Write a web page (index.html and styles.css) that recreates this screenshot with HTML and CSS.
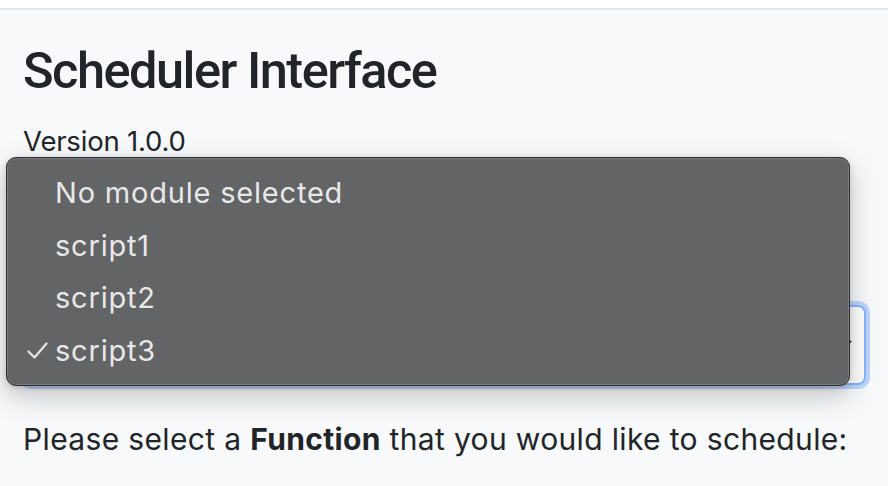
FILE: index.html
```html
<!DOCTYPE html>
<html lang="en">
<head>
<meta charset="utf-8">
<title>Scheduler Interface</title>
<link rel="stylesheet" href="styles.css">
</head>
<body>
<div class="topbar"></div>
<main class="page">
  <h1 class="title">Scheduler Interface</h1>
  <div class="version">Version 1.0.0</div>
  <div class="select">
    <svg class="chevron" width="16" height="10" viewBox="0 0 16 10"><path d="M1.5 1.5 L8 8 L14.5 1.5" fill="none" stroke="#343a40" stroke-width="2" stroke-linecap="round" stroke-linejoin="round"/></svg>
  </div>
  <p class="prompt">Please select a <b>Function</b> that you would like to schedule:</p>

  <ul class="menu">
    <li class="menu-item">No module selected</li>
    <li class="menu-item">script1</li>
    <li class="menu-item">script2</li>
    <li class="menu-item checked"><svg class="check" width="24" height="19" viewBox="0 0 24 19"><path d="M2.5 10.5 L8.5 16.5 L20.5 2.5" fill="none" stroke="#e6e6e6" stroke-width="2.2" stroke-linecap="round" stroke-linejoin="round"/></svg>script3</li>
  </ul>
</main>
</body>
</html>
```
FILE: styles.css
```css
html, body {
  margin: 0;
  padding: 0;
}
body {
  background: #f8f9fa;
  font-family: Inter, "Noto Sans", "Liberation Sans", sans-serif;
  color: #212529;
  height: 486px;
  overflow: hidden;
}
.topbar {
  height: 8px;
  background: #ffffff;
  border-bottom: 2px solid #e2e4e7;
}
.page {
  position: relative;
  padding: 31px 23px 0;
}
.title {
  margin: 0;
  font-family: Roboto, Inter, "Liberation Sans", sans-serif;
  font-size: 50.5px;
  line-height: 60px;
  font-weight: 500;
  letter-spacing: -1.5px;
}
.version {
  margin-top: 19px;
  font-size: 27.5px;
  line-height: 42px;
  letter-spacing: -0.2px;
}
.select {
  margin-top: 143px;
  height: 76px;
  border: 2px solid #86b7fe;
  border-radius: 8px;
  background: #ffffff;
  box-shadow: 0 0 0 4px rgba(13, 110, 253, 0.25);
  display: flex;
  align-items: center;
  justify-content: flex-end;
  padding: 0 12px 0 20px;
  margin-right: -1px;
}
.chevron {
  display: block;
}
.prompt {
  margin: 32px 0 0;
  font-size: 30px;
  line-height: 45px;
  letter-spacing: 0.35px;
}
.prompt b {
  font-weight: 700;
}
.menu {
  position: absolute;
  left: 6px;
  top: 147px;
  width: 844px;
  height: 229px;
  box-sizing: border-box;
  margin: 0;
  padding: 9px 0 0;
  list-style: none;
  background: #636466;
  border: 1px solid #2e2e30;
  border-radius: 10px;
  box-shadow: inset 0 0 0 1px #7a7b7d, 0 10px 28px rgba(0, 0, 0, 0.22), 0 2px 6px rgba(0, 0, 0, 0.15);
}
.menu-item {
  position: relative;
  height: 52.5px;
  line-height: 52.5px;
  padding-left: 48px;
  font-size: 29px;
  color: #e8e8e8;
  letter-spacing: 0.8px;
}
.check {
  position: absolute;
  left: 19px;
  top: 16px;
}
```
